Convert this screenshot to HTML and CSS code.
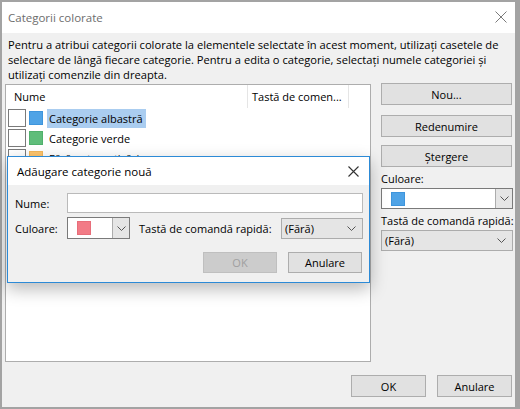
FILE: index.html
```html
<!DOCTYPE html>
<html lang="ro">
<head>
<meta charset="utf-8">
<title>Categorii colorate</title>
<link rel="stylesheet" href="styles.css">
</head>
<body>
<div class="window">
  <div class="titlebar">
    <span class="title">Categorii colorate</span>
    <svg class="close" width="12" height="12" viewBox="0 0 12 12"><path d="M0.5 0.5 L11.5 11.5 M11.5 0.5 L0.5 11.5" stroke="#7a7a7a" stroke-width="1" fill="none"/></svg>
  </div>
  <div class="content">
    <p class="desc">Pentru a atribui categorii colorate la elementele selectate în acest moment, utilizați casetele de<br>selectare de lângă fiecare categorie. Pentru a edita o categorie, selectați numele categoriei și<br>utilizați comenzile din dreapta.</p>
    <div class="main">
      <div class="listwrap">
        <div class="list">
          <div class="lhead">
            <div class="hc hc1">Nume</div>
            <div class="hc hc2">Tastă de comen...</div>
          </div>
          <div class="row">
            <span class="check"></span><span class="swatch blue"></span><span class="name selected">Categorie albastră</span>
          </div>
          <div class="row">
            <span class="check"></span><span class="swatch green"></span><span class="name">Categorie verde</span>
          </div>
          <div class="row">
            <span class="check"></span><span class="swatch orange"></span><span class="name">Fără automatizări</span>
          </div>
        </div>

        <div class="dialog">
          <div class="dtitle">
            <span>Adăugare categorie nouă</span>
            <svg class="dclose" width="11" height="11" viewBox="0 0 11 11"><path d="M0.5 0.5 L10.5 10.5 M10.5 0.5 L0.5 10.5" stroke="#333" stroke-width="1.1" fill="none"/></svg>
          </div>
          <div class="dbody">
            <div class="drow">
              <span class="dlabel">Nume:</span>
              <span class="textbox"></span>
            </div>
            <div class="drow drow2">
              <span class="dlabel">Culoare:</span>
              <span class="colorsel small">
                <span class="cs-val"><span class="swatch pink"></span></span>
                <span class="cs-btn"><svg width="9" height="5" viewBox="0 0 9 5"><polyline points="0.5,0.5 4.5,4.5 8.5,0.5" stroke="#555" fill="none"/></svg></span>
              </span>
              <span class="dlabel2">Tastă de comandă rapidă:</span>
              <span class="combo dcombo">(Fără)<svg width="9" height="5" viewBox="0 0 9 5"><polyline points="0.5,0.5 4.5,4.5 8.5,0.5" stroke="#555" fill="none"/></svg></span>
            </div>
            <div class="dbuttons">
              <button class="btn disabled">OK</button>
              <button class="btn">Anulare</button>
            </div>
          </div>
        </div>
      </div>

      <div class="side">
        <button class="btn sbtn">Nou...</button>
        <button class="btn sbtn b2">Redenumire</button>
        <button class="btn sbtn b3">Ștergere</button>
        <div class="slabel">Culoare:</div>
        <span class="colorsel wide">
          <span class="cs-val"><span class="swatch blue"></span></span>
          <span class="cs-btn"><svg width="9" height="5" viewBox="0 0 9 5"><polyline points="0.5,0.5 4.5,4.5 8.5,0.5" stroke="#555" fill="none"/></svg></span>
        </span>
        <div class="slabel">Tastă de comandă rapidă:</div>
        <span class="combo scombo">(Fără)<svg width="9" height="5" viewBox="0 0 9 5"><polyline points="0.5,0.5 4.5,4.5 8.5,0.5" stroke="#555" fill="none"/></svg></span>
      </div>
    </div>
    <div class="footer">
      <button class="btn fbtn">OK</button>
      <button class="btn fbtn">Anulare</button>
    </div>
  </div>
</div>
</body>
</html>
```

FILE: styles.css
```css
* { box-sizing: border-box; }
html, body { margin: 0; padding: 0; }
body {
  background: #a3a3a3;
  padding: 2px 5px 2px 2px;
  width: 520px;
  height: 409px;
  overflow: hidden;
  font-family: "Open Sans", "Noto Sans", sans-serif;
  font-size: 11px;
  color: #000;
}
.window {
  width: 513px;
  height: 405px;
  display: flex;
  flex-direction: column;
  background: #f0f0f0;
}
.titlebar {
  height: 31px;
  flex: none;
  background: #fff;
  display: flex;
  align-items: center;
  justify-content: space-between;
  padding: 0 8px 0 6px;
}
.title { color: #6d6d6d; font-size: 11.5px; }
.close { margin-top: -2px; }
.content {
  flex: 1;
  display: flex;
  flex-direction: column;
  padding: 4px 2px 0 3px;
}
.desc {
  margin: 0;
  padding-left: 3px;
  line-height: 15px;
  font-size: 11.15px;
  white-space: nowrap;
}
.main {
  margin-top: 2px;
  display: flex;
  gap: 10px;
}
.listwrap { position: relative; width: 366px; }
.list {
  width: 366px;
  height: 278px;
  background: #fff;
  border: 1px solid #adadad;
}
.lhead { display: flex; height: 23px; }
.hc { height: 23px; line-height: 23px; border-right: 1px solid #e5e5e5; }
.hc1 { width: 242px; padding-left: 8px; }
.hc2 { width: 101px; padding-left: 4px; white-space: nowrap; }
.row { display: flex; align-items: center; height: 20px; }
.check {
  width: 18px; height: 18px;
  margin-left: 2px;
  border: 1px solid #7a7a7a;
  background: #fff;
}
.swatch { display: inline-block; width: 14px; height: 14px; }
.row .swatch { margin-left: 3px; }
.blue { background: #4fa3e6; border: 1px solid #3e95dc; }
.green { background: #5fbd7a; border: 1px solid #50b06c; }
.orange { background: #ffc66e; border: 1px solid #f3b85c; }
.pink { background: #f27b86; border: 1px solid #e86e7a; }
.name { margin-left: 4px; padding: 0 3px 0 2px; line-height: 19px; white-space: nowrap; }
.selected { background: #aacdf0; }

.dialog {
  position: absolute;
  left: 2px;
  top: 72px;
  width: 363px;
  height: 127px;
  border: 1px solid #2c8ad6;
  background: #f0f0f0;
  box-shadow: 0 6px 16px rgba(0,0,0,0.28);
  display: flex;
  flex-direction: column;
}
.dtitle {
  height: 28px;
  background: #fff;
  display: flex;
  align-items: center;
  justify-content: space-between;
  padding: 0 10px 0 9px;
  font-size: 11.5px;
}
.dbody {
  flex: 1;
  padding: 8px 6px 8px 7px;
  display: flex;
  flex-direction: column;
}
.drow { display: flex; align-items: center; height: 20px; }
.drow2 { height: 22px; margin-top: 4px; }
.dlabel { width: 52px; flex: none; }
.textbox {
  flex: 1;
  height: 20px;
  background: #fff;
  border: 1px solid #bababa;
}
.colorsel {
  display: flex;
  height: 22px;
  background: #fff;
  border: 1px solid #7a7a7a;
}
.colorsel.small { width: 63px; flex: none; }
.colorsel.wide { width: 132px; height: 21px; }
.cs-val { flex: 1; display: flex; align-items: center; padding-left: 9px; }
.cs-btn {
  width: 17px;
  background: #e5e5e5;
  border-left: 1px solid #acacac;
  display: flex;
  align-items: center;
  justify-content: center;
}
.dlabel2 { flex: 1; margin-left: 9px; white-space: nowrap; }
.combo {
  display: flex;
  align-items: center;
  justify-content: space-between;
  background: #e5e5e5;
  border: 1px solid #acacac;
  padding: 0 6px 0 3px;
}
.dcombo { width: 82px; height: 21px; }
.dbuttons {
  margin-top: 13px;
  display: flex;
  justify-content: flex-end;
  gap: 11px;
  padding-right: 1px;
}
.btn {
  font: inherit;
  color: #000;
  background: #e1e1e1;
  border: 1px solid #adadad;
  padding: 0;
  margin: 0;
}
.dbuttons .btn { width: 74px; height: 21px; }
.btn.disabled { background: #cccccc; border-color: #bfbfbf; color: #a0a0a0; }

.side {
  width: 132px;
  display: flex;
  flex-direction: column;
  margin-top: -1px;
}
.sbtn { height: 22px; width: 131px; }
.b2 { margin-top: 10px; }
.b3 { margin-top: 8px; }
.slabel { margin-top: 4px; line-height: 15px; white-space: nowrap; }
.side .colorsel { margin-top: 2px; }
.scombo { margin-top: 2px; height: 21px; width: 132px; }

.footer {
  margin-top: 13px;
  display: flex;
  justify-content: flex-end;
  gap: 11px;
  padding-right: 1px;
}
.fbtn { width: 75px; height: 22px; }
```
